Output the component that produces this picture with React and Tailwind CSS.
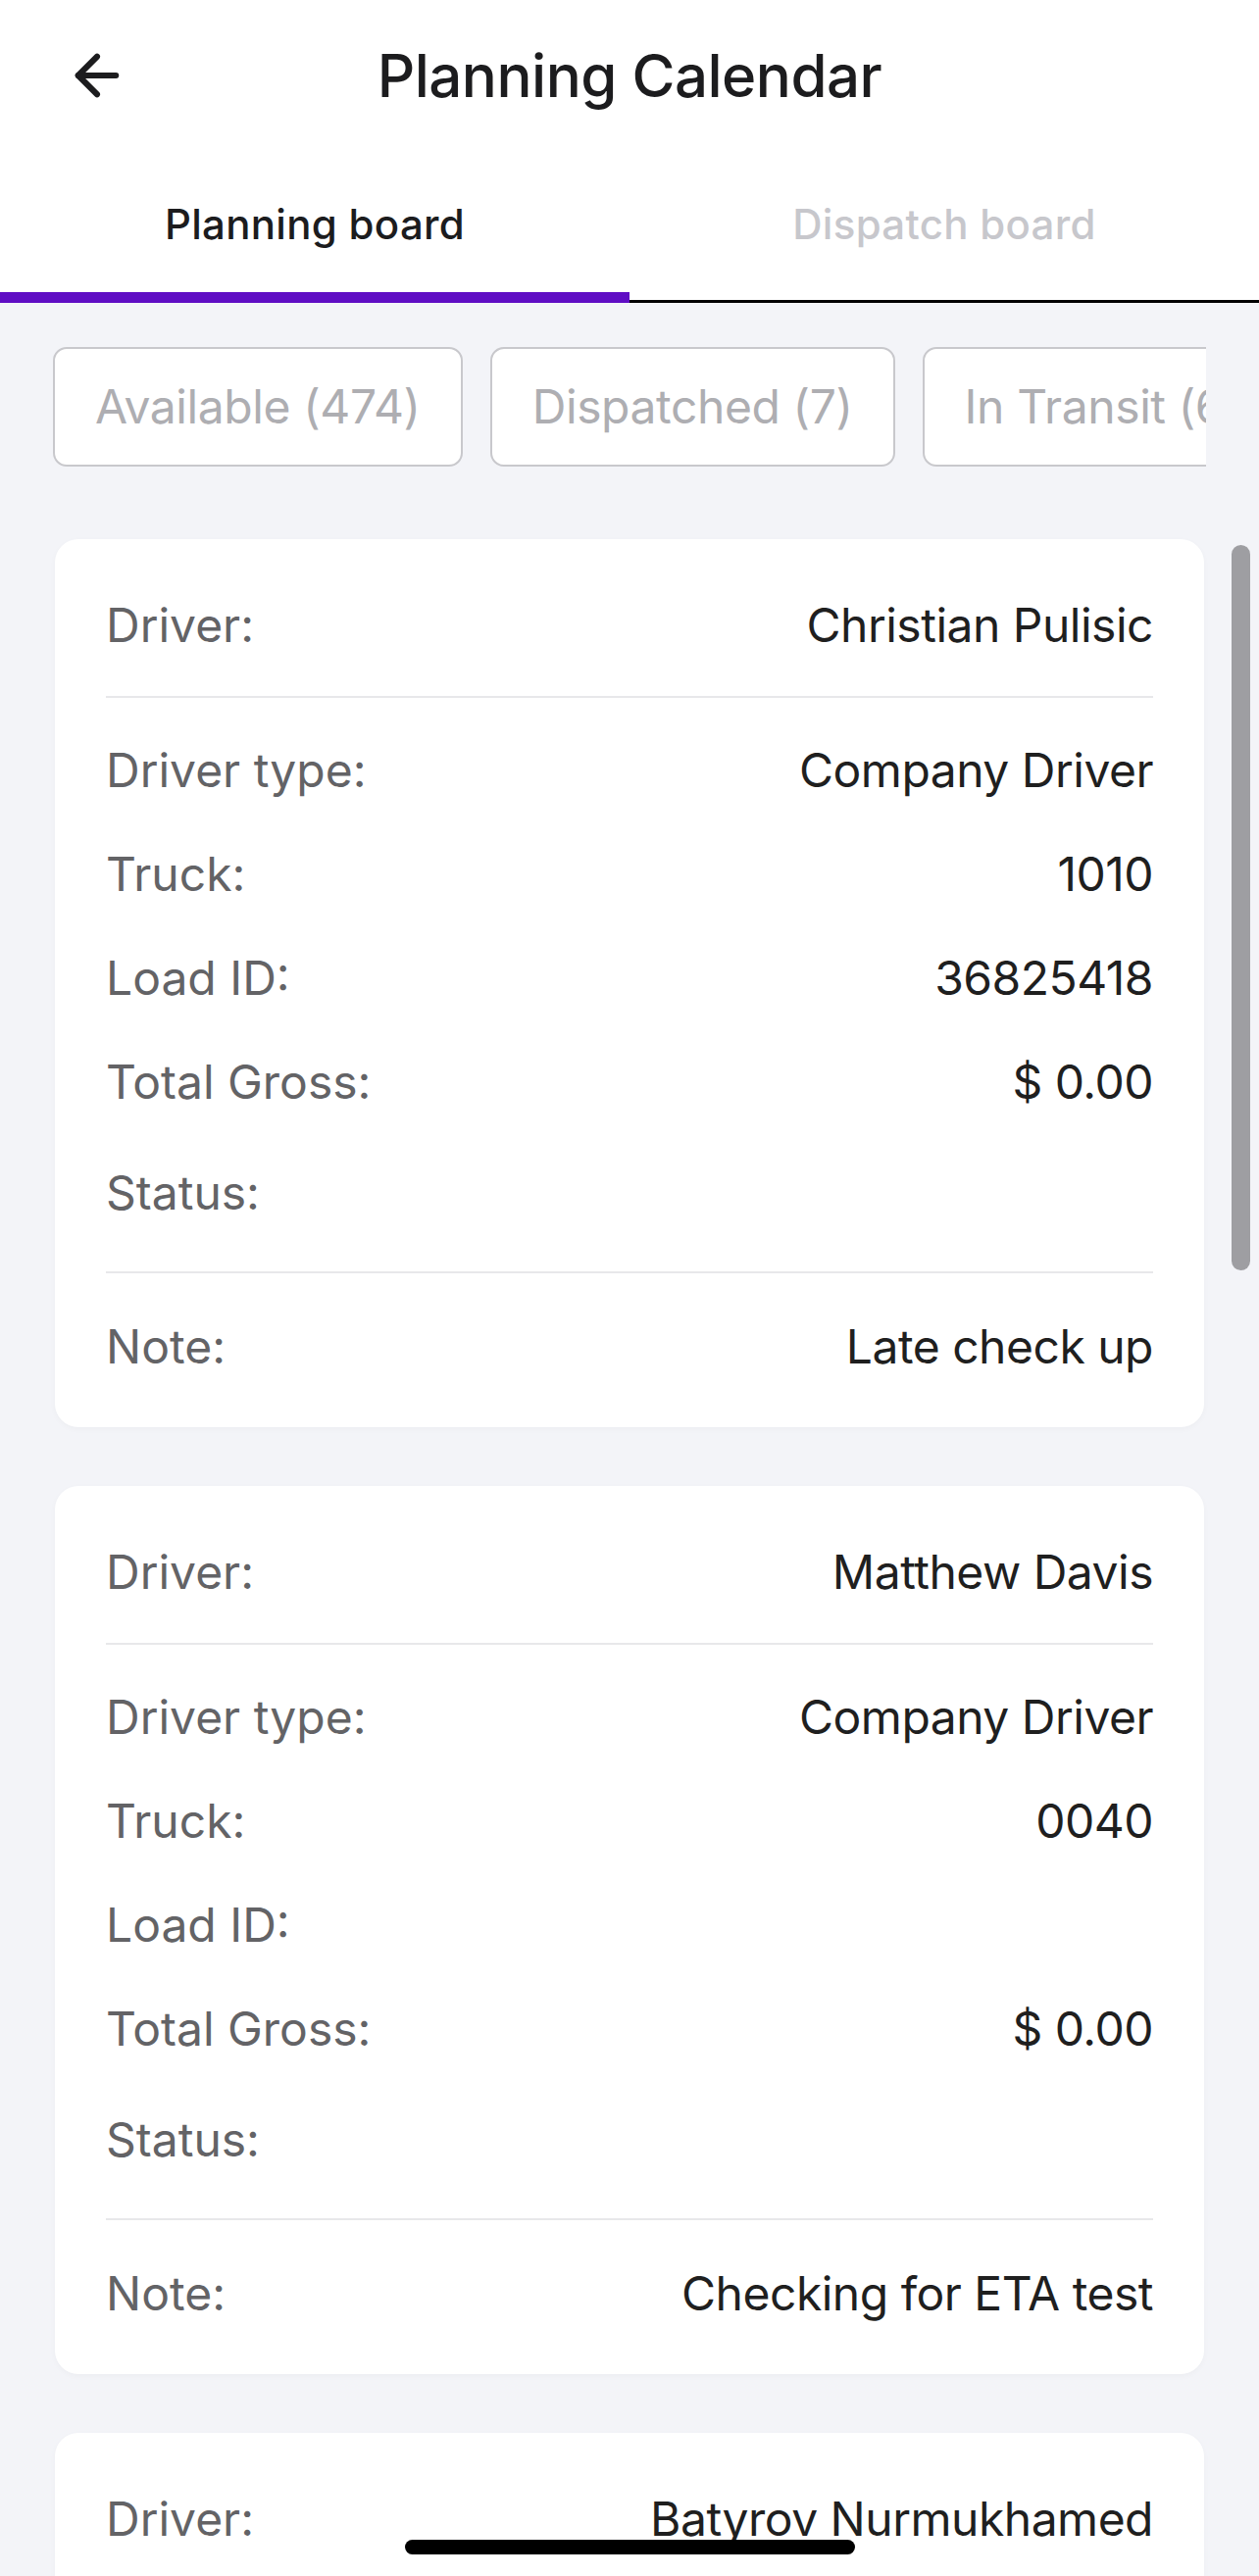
import { ArrowLeft } from 'lucide-react';

const loads = [
  {
    driver: 'Christian Pulisic',
    type: 'Company Driver',
    truck: '1010',
    loadId: '36825418',
    gross: '$ 0.00',
    note: 'Late check up',
  },
  {
    driver: 'Matthew Davis',
    type: 'Company Driver',
    truck: '0040',
    loadId: '',
    gross: '$ 0.00',
    note: 'Checking for ETA test',
  },
  {
    driver: 'Batyrov Nurmukhamed',
    type: 'Company Driver',
    truck: '2210',
    loadId: '',
    gross: '$ 0.00',
    note: '',
  },
];

const filters = ['Available (474)', 'Dispatched (7)', 'In Transit (6)', 'Delivered (12)'];

const Row = ({ label, value, tall }) => (
  <div className={`flex items-center justify-between ${tall ? 'h-[120px]' : 'h-[106px]'}`}>
    <span className="text-[#636366]">{label}</span>
    <span className="text-[#1f1f1f] tracking-[-0.5px]">{value}</span>
  </div>
);

const LoadCard = ({ load }) => (
  <div className="bg-white rounded-[24px] px-[52px] pt-[35px] pb-[29px] shadow-[0_2px_6px_rgba(0,0,0,0.03)]">
    <Row label="Driver:" value={load.driver} />
    <div className="h-[2px] bg-[#e8e8ea] mt-[19px] mb-[21px]" />
    <Row label="Driver type:" value={load.type} />
    <Row label="Truck:" value={load.truck} />
    <Row label="Load ID:" value={load.loadId} />
    <Row label="Total Gross:" value={load.gross} />
    <Row label="Status:" value="" tall />
    <div className="h-[2px] bg-[#e8e8ea] mt-[20px] mb-[22px]" />
    <Row label="Note:" value={load.note} />
  </div>
);

export default function App() {
  return (
    <div
      className="relative h-[2628px] overflow-hidden bg-[#f3f4f8] text-[48px] leading-none"
      style={{ fontFamily: 'Inter, "Noto Sans", sans-serif' }}
    >
      <header className="bg-white">
        <div className="grid grid-cols-[1fr_auto_1fr] items-center h-[154px]">
          <div className="pl-[66px] flex items-center">
            <ArrowLeft size={66} strokeWidth={2.2} className="text-[#1c1c1e]" />
          </div>
          <h1 className="text-[60px] font-medium text-[#1c1c1e] tracking-[-0.5px]">Planning Calendar</h1>
          <div />
        </div>
        <div className="grid grid-cols-2">
          <div className="flex flex-col">
            <div className="h-[144px] pt-[6px] flex items-center justify-center text-[42px] font-medium tracking-[0.3px] text-[#1c1c1e]">
              Planning board
            </div>
            <div className="h-[11px] bg-[#5f0dc4]" />
          </div>
          <div className="flex flex-col">
            <div className="h-[144px] pt-[6px] flex items-center justify-center text-[42px] font-medium tracking-[0.3px] text-[#c7c7cc]">
              Dispatch board
            </div>
            <div className="h-[11px] flex items-end">
              <div className="h-[3px] w-full bg-black" />
            </div>
          </div>
        </div>
      </header>

      <div className="mx-[54px] mt-[45px] overflow-hidden">
        <div className="flex gap-[28px]">
          {filters.map((f) => (
            <div
              key={f}
              className="flex-none h-[122px] px-[41px] flex items-center bg-white border-2 border-[#c8c8cc] rounded-[14px] text-[#aeaeb2] tracking-[-0.4px] whitespace-nowrap"
            >
              {f}
            </div>
          ))}
        </div>
      </div>

      <main className="mx-[56px] mt-[74px] flex flex-col gap-[60px]">
        {loads.map((load) => (
          <LoadCard key={load.driver} load={load} />
        ))}
      </main>

      <div className="absolute left-[1256px] top-[556px] w-[19px] h-[740px] rounded-full bg-[#9e9ea2]" />
      <div className="absolute left-[413px] top-[2591px] w-[459px] h-[15px] rounded-full bg-black" />
    </div>
  );
}
